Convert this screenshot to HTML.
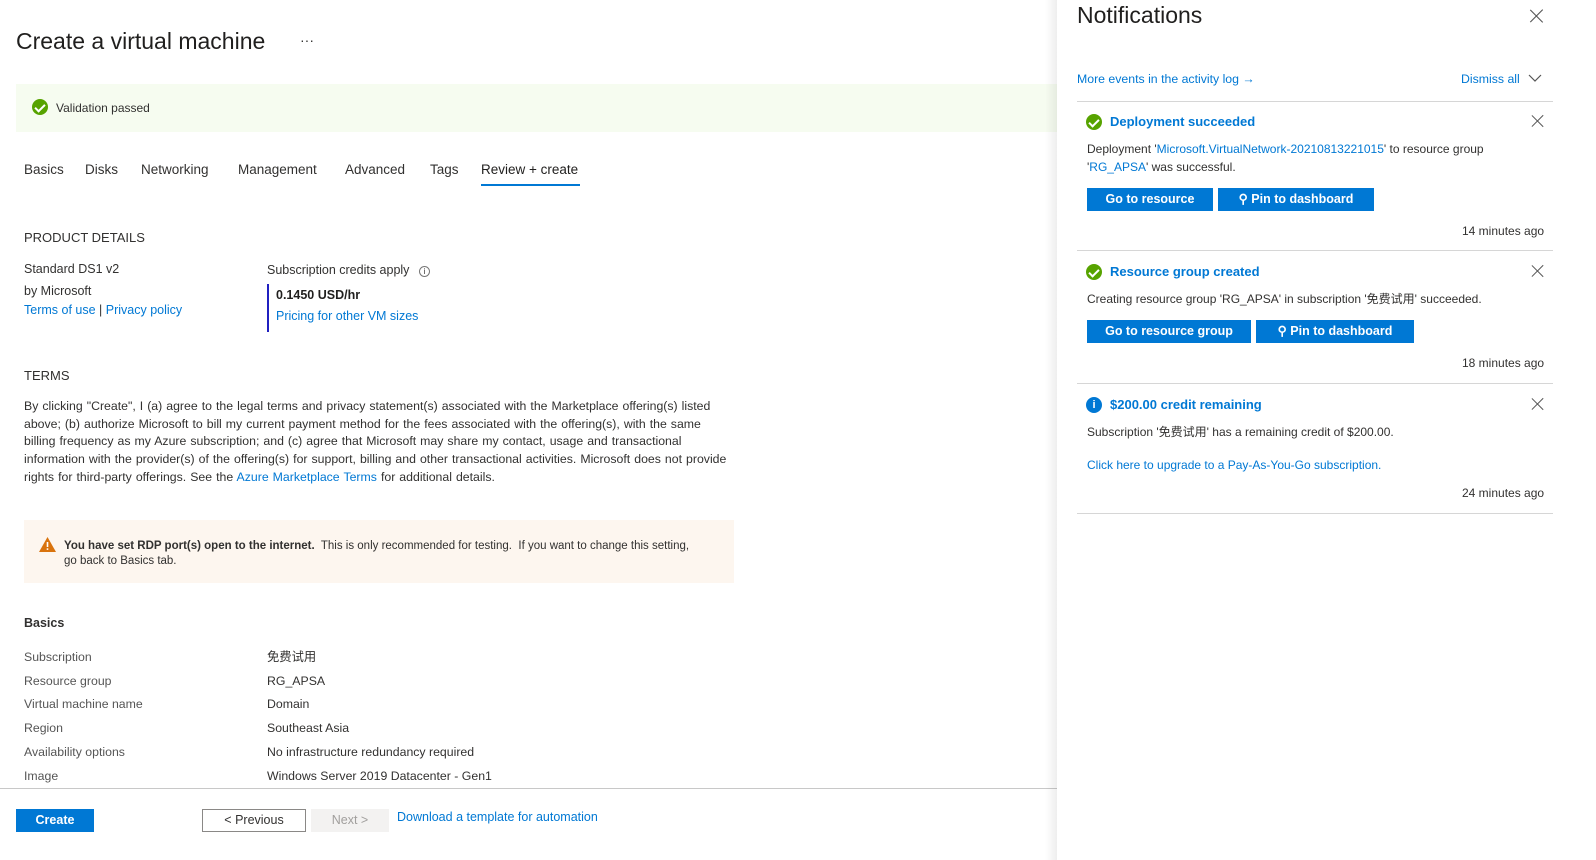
<!DOCTYPE html>
<html><head><meta charset="utf-8"><style>
*{margin:0;padding:0;box-sizing:border-box}
body{width:1596px;height:860px;position:relative;overflow:hidden;background:#fff;font-family:"Liberation Sans","Noto Sans CJK SC",sans-serif;color:#323130;font-size:12px}
.a{position:absolute;white-space:nowrap}
.l{color:#0078d4}
.btn{position:absolute;background:#0078d4;color:#fff;font-weight:bold;font-size:12.5px;text-align:center;line-height:23px;height:23px}
.x{position:absolute;width:12px;height:12px}
.x:before,.x:after{content:"";position:absolute;left:5px;top:-2px;width:1.3px;height:16px;background:#555;transform:rotate(45deg)}
.x:after{transform:rotate(-45deg)}
.ok{position:absolute;width:16px;height:16px;border-radius:50%;background:#57a300}
.ok:after{content:"";position:absolute;left:5px;top:2.5px;width:4px;height:8px;border:solid #fff;border-width:0 2px 2px 0;transform:rotate(45deg)}
.hr{position:absolute;height:1px;background:#d6d6d6}
</style></head><body>
<div class="a" style="left:16px;top:28px;font-size:23px;color:#201f1e">Create a virtual machine</div>
<div class="a" style="left:300px;top:32px;font-size:14px">···</div>
<div class="a" style="left:16px;top:84px;width:1045px;height:48px;background:#f6fcf0"></div>
<div class="ok" style="left:32px;top:99px"></div>
<div class="a" style="left:56px;top:101px;font-size:12px">Validation passed</div>
<div class="a" style="left:24px;top:162px;font-size:13.5px">Basics</div>
<div class="a" style="left:85px;top:162px;font-size:13.5px">Disks</div>
<div class="a" style="left:141px;top:162px;font-size:13.5px">Networking</div>
<div class="a" style="left:238px;top:162px;font-size:13.5px">Management</div>
<div class="a" style="left:345px;top:162px;font-size:13.5px">Advanced</div>
<div class="a" style="left:430px;top:162px;font-size:13.5px">Tags</div>
<div class="a" style="left:481px;top:162px;font-size:13.5px;color:#201f1e">Review + create</div>
<div class="a" style="left:481px;top:184px;width:99px;height:2px;background:#0078d4"></div>
<div class="a" style="left:24px;top:230px;font-size:13px">PRODUCT DETAILS</div>
<div class="a" style="left:24px;top:262px;font-size:12.5px">Standard DS1 v2</div>
<div class="a" style="left:24px;top:284px;font-size:12.5px">by Microsoft</div>
<div class="a" style="left:24px;top:303px;font-size:12.5px"><span class="l">Terms of use</span> | <span class="l">Privacy policy</span></div>
<div class="a" style="left:267px;top:263px;font-size:12.5px">Subscription credits apply <span style="display:inline-block;width:11px;height:11px;border:1px solid #777;border-radius:50%;font-size:8px;text-align:center;line-height:9px;margin-left:6px">i</span></div>
<div class="a" style="left:267px;top:284px;width:2px;height:48px;background:#2020c0"></div>
<div class="a" style="left:276px;top:288px;font-size:12.5px;font-weight:bold;color:#201f1e">0.1450 USD/hr</div>
<div class="a l" style="left:276px;top:309px;font-size:12.5px">Pricing for other VM sizes</div>
<div class="a" style="left:24px;top:368px;font-size:13px">TERMS</div>
<div class="a" style="left:24px;top:398px;width:705px;white-space:normal;font-size:12.3px;word-spacing:0.6px;line-height:17.7px">By clicking "Create", I (a) agree to the legal terms and privacy statement(s) associated with the Marketplace offering(s) listed above; (b) authorize Microsoft to bill my current payment method for the fees associated with the offering(s), with the same billing frequency as my Azure subscription; and (c) agree that Microsoft may share my contact, usage and transactional information with the provider(s) of the offering(s) for support, billing and other transactional activities. Microsoft does not provide rights for third-party offerings. See the <span class="l">Azure Marketplace Terms</span> for additional details.</div>
<div class="a" style="left:24px;top:520px;width:710px;height:63px;background:#fdf6ef"></div>
<svg class="a" style="left:39px;top:537px" width="17" height="15" viewBox="0 0 17 15"><path d="M8.5 0L17 15H0z" fill="#d9730d"/><rect x="7.7" y="5" width="1.6" height="5" fill="#fff"/><rect x="7.7" y="11.3" width="1.6" height="1.6" fill="#fff"/></svg>
<div class="a" style="left:64px;top:539px;font-size:11.5px;line-height:15px"><b>You have set RDP port(s) open to the internet.</b>&nbsp; This is only recommended for testing.&nbsp; If you want to change this setting,<br>go back to Basics tab.</div>
<div class="a" style="left:24px;top:616px;font-size:12.5px;font-weight:bold">Basics</div>
<div class="a" style="left:24px;top:646px;font-size:12.3px;line-height:23.7px;color:#555">Subscription<br>Resource group<br>Virtual machine name<br>Region<br>Availability options<br>Image</div>
<div class="a" style="left:267px;top:646px;font-size:12.3px;line-height:23.7px">免费试用<br>RG_APSA<br>Domain<br>Southeast Asia<br>No infrastructure redundancy required<br>Windows Server 2019 Datacenter - Gen1</div>
<div class="a" style="left:0;top:788px;width:1060px;height:1px;background:#c8c8c8"></div>
<div class="btn" style="left:16px;top:809px;width:78px">Create</div>
<div class="a" style="left:202px;top:809px;width:104px;height:23px;border:1px solid #8a8886;text-align:center;line-height:21px;font-size:12.5px">&lt; Previous</div>
<div class="a" style="left:311px;top:809px;width:78px;height:23px;background:#f3f2f1;color:#a19f9d;text-align:center;line-height:23px;font-size:12.5px">Next &gt;</div>
<div class="a l" style="left:397px;top:810px;font-size:12.5px">Download a template for automation</div>

<div class="a" style="left:1045px;top:0;width:14px;height:860px;background:linear-gradient(to right,rgba(0,0,0,0),rgba(0,0,0,0.08))"></div>
<div class="a" style="left:1057px;top:0;width:539px;height:860px;background:#fff"></div>
<div class="a" style="left:1077px;top:2px;font-size:23px;color:#201f1e">Notifications</div>
<div class="x" style="left:1531px;top:10px;transform:scale(1.1)"></div>
<div class="a l" style="left:1077px;top:72px;font-size:12.3px">More events in the activity log →</div>
<div class="a l" style="left:1461px;top:72px;font-size:12.3px">Dismiss all</div>
<svg class="a" style="left:1528px;top:74px" width="14" height="8"><path d="M1 1l6 6 6-6" stroke="#555" fill="none" stroke-width="1.2"/></svg>
<div class="hr" style="left:1077px;top:101px;width:476px"></div>
<div class="ok" style="left:1086px;top:114px"></div>
<div class="a l" style="left:1110px;top:114px;font-size:13px;font-weight:600">Deployment succeeded</div>
<div class="x" style="left:1532px;top:115px"></div>
<div class="a" style="left:1087px;top:140px;font-size:12px;line-height:18px">Deployment '<span class="l">Microsoft.VirtualNetwork-20210813221015</span>' to resource group<br>'<span class="l">RG_APSA</span>' was successful.</div>
<div class="btn" style="left:1087px;top:188px;width:126px">Go to resource</div>
<div class="btn" style="left:1218px;top:188px;width:156px">⚲ Pin to dashboard</div>
<div class="a" style="left:1462px;top:224px;font-size:12px">14 minutes ago</div>
<div class="hr" style="left:1077px;top:250px;width:476px"></div>
<div class="ok" style="left:1086px;top:264px"></div>
<div class="a l" style="left:1110px;top:264px;font-size:13px;font-weight:600">Resource group created</div>
<div class="x" style="left:1532px;top:265px"></div>
<div class="a" style="left:1087px;top:290px;font-size:12px">Creating resource group 'RG_APSA' in subscription '免费试用' succeeded.</div>
<div class="btn" style="left:1087px;top:320px;width:164px">Go to resource group</div>
<div class="btn" style="left:1256px;top:320px;width:158px">⚲ Pin to dashboard</div>
<div class="a" style="left:1462px;top:356px;font-size:12px">18 minutes ago</div>
<div class="hr" style="left:1077px;top:383px;width:476px"></div>
<div class="a" style="left:1086px;top:397px;width:16px;height:16px;border-radius:50%;background:#0078d4;color:#fff;font-weight:bold;font-size:11px;text-align:center;line-height:16px">i</div>
<div class="a l" style="left:1110px;top:397px;font-size:13px;font-weight:600">$200.00 credit remaining</div>
<div class="x" style="left:1532px;top:398px"></div>
<div class="a" style="left:1087px;top:423px;font-size:12px">Subscription '免费试用' has a remaining credit of $200.00.</div>
<div class="a l" style="left:1087px;top:458px;font-size:12px">Click here to upgrade to a Pay-As-You-Go subscription.</div>
<div class="a" style="left:1462px;top:486px;font-size:12px">24 minutes ago</div>
<div class="hr" style="left:1077px;top:513px;width:476px"></div>
</body></html>
